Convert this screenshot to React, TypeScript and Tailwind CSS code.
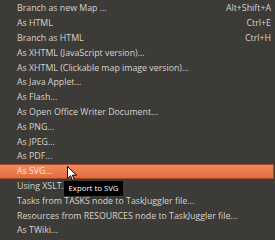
import React from "react";

const items: { label: string; shortcut?: string }[] = [
  { label: "Branch as new Map ...", shortcut: "Alt+Shift+A" },
  { label: "As HTML", shortcut: "Ctrl+E" },
  { label: "Branch as HTML", shortcut: "Ctrl+H" },
  { label: "As XHTML (JavaScript version)..." },
  { label: "As XHTML (Clickable map image version)..." },
  { label: "As Java Applet..." },
  { label: "As Flash..." },
  { label: "As Open Office Writer Document..." },
  { label: "As PNG..." },
  { label: "As JPEG..." },
  { label: "As PDF..." },
  { label: "As SVG..." },
  { label: "Using XSLT..." },
  { label: "Tasks from TASKS node to TaskJuggler file..." },
  { label: "Resources from RESOURCES node to TaskJuggler file..." },
  { label: "As TWiki..." },
];

function Cursor() {
  return (
    <svg width="11" height="16" viewBox="0 0 11 16" className="absolute left-[67px] top-[166px]">
      <path d="M0.5 0.5 L0.5 12.5 L3.5 9.8 L5.6 14.6 L7.4 13.8 L5.4 9.2 L9.5 9.2 Z" fill="#ffffff" stroke="#000000" strokeWidth="1" strokeLinejoin="round" />
    </svg>
  );
}

export default function App() {
  return (
    <div className="relative h-[240px] w-[275px] overflow-hidden bg-[#3c3b37] pt-[1.6px] text-[8.8px] text-[#d8d4cb]" style={{ fontFamily: '"Open Sans", sans-serif' }}>
      {items.map((item) => {
        const active = item.label === "As SVG...";
        return (
          <div
            key={item.label}
            className={
              active
                ? "mr-[1px] flex h-[14.8px] items-center justify-between border border-l-0 border-[#a04c2a] bg-gradient-to-b from-[#f38a5e] to-[#e56a3a] pl-[17px] pr-[3px] text-[#fbeee6]"
                : "flex h-[14.8px] items-center justify-between pl-[17px] pr-[4px]"
            }
          >
            <span className="whitespace-nowrap">{item.label}</span>
            {item.shortcut && <span className="whitespace-nowrap">{item.shortcut}</span>}
          </div>
        );
      })}

      <div className="absolute left-[64px] top-[181px] flex h-[15px] w-[59px] items-center justify-center bg-[#000000] text-[7.8px] text-[#ffffff]">
        Export to SVG
      </div>
      <Cursor />
    </div>
  );
}
